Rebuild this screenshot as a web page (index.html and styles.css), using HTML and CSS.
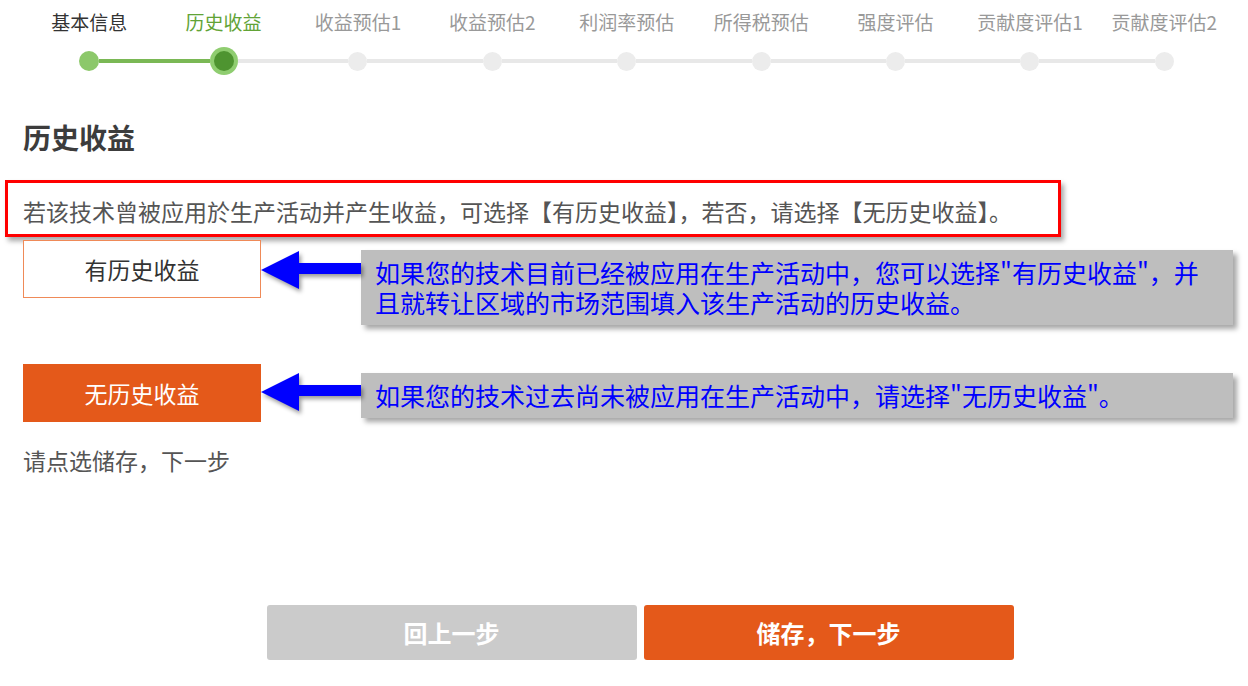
FILE: index.html
```html
<!DOCTYPE html>
<html lang="zh-CN">
<head>
<meta charset="utf-8">
<title>历史收益</title>
<link rel="stylesheet" href="styles.css">
</head>
<body>
<div class="page">
  <div class="steps">
    <div class="step done">
      <div class="step-label">基本信息</div>
      <div class="track"><span class="seg seg-none"></span><span class="dot"></span><span class="seg seg-green"></span></div>
    </div>
    <div class="step active">
      <div class="step-label">历史收益</div>
      <div class="track"><span class="seg seg-green"></span><span class="dot"><span class="dot-inner"></span></span><span class="seg"></span></div>
    </div>
    <div class="step">
      <div class="step-label">收益预估1</div>
      <div class="track"><span class="seg"></span><span class="dot"></span><span class="seg"></span></div>
    </div>
    <div class="step">
      <div class="step-label">收益预估2</div>
      <div class="track"><span class="seg"></span><span class="dot"></span><span class="seg"></span></div>
    </div>
    <div class="step">
      <div class="step-label">利润率预估</div>
      <div class="track"><span class="seg"></span><span class="dot"></span><span class="seg"></span></div>
    </div>
    <div class="step">
      <div class="step-label">所得税预估</div>
      <div class="track"><span class="seg"></span><span class="dot"></span><span class="seg"></span></div>
    </div>
    <div class="step">
      <div class="step-label">强度评估</div>
      <div class="track"><span class="seg"></span><span class="dot"></span><span class="seg"></span></div>
    </div>
    <div class="step">
      <div class="step-label">贡献度评估1</div>
      <div class="track"><span class="seg"></span><span class="dot"></span><span class="seg"></span></div>
    </div>
    <div class="step">
      <div class="step-label">贡献度评估2</div>
      <div class="track"><span class="seg"></span><span class="dot"></span><span class="seg seg-none"></span></div>
    </div>
  </div>

  <div class="content">
    <h1 class="title">历史收益</h1>
    <div class="notice">若该技术曾被应用於生产活动并产生收益，可选择【有历史收益】，若否，请选择【无历史收益】。</div>

    <div class="choice-row row-first">
      <button class="choice choice-outline">有历史收益</button>
      <svg class="arrow" width="100" height="60" viewBox="0 0 100 60"><polygon points="0,30 38,11 38,23 100,23 100,34 38,34 38,49" fill="#0000ff"/></svg>
      <div class="callout callout-two">
        <div class="callout-line">如果您的技术目前已经被应用在生产活动中，您可以选择"有历史收益"，并</div>
        <div class="callout-line">且就转让区域的市场范围填入该生产活动的历史收益。</div>
      </div>
    </div>

    <div class="choice-row row-second">
      <button class="choice choice-filled">无历史收益</button>
      <svg class="arrow" width="100" height="60" viewBox="0 0 100 60"><polygon points="0,28 38,9 38,21 100,21 100,32 38,32 38,47" fill="#0000ff"/></svg>
      <div class="callout callout-one"><div class="callout-line">如果您的技术过去尚未被应用在生产活动中，请选择"无历史收益"。</div></div>
    </div>

    <p class="hint">请点选储存，下一步</p>
  </div>

  <div class="footer">
    <button class="btn btn-back">回上一步</button>
    <button class="btn btn-next">储存，下一步</button>
  </div>
</div>
</body>
</html>
```

FILE: styles.css
```css
* { box-sizing: border-box; }
html, body { margin: 0; padding: 0; background: #ffffff; }
body {
  font-family: "Noto Sans CJK SC", "Noto Sans", sans-serif;
  color: #555;
}
.page { width: 1248px; height: 686px; overflow: hidden; }

/* steps */
.steps {
  display: grid;
  grid-template-columns: repeat(9, 134.4px);
  padding: 10px 0 0 22px;
}
.step { display: flex; flex-direction: column; align-items: stretch; }
.step-label {
  text-align: center;
  font-size: 19px;
  line-height: 24px;
  height: 24px;
  color: #999;
  white-space: nowrap;
}
.step.done .step-label { color: #333; }
.step.active .step-label { color: #62a336; }
.track {
  display: flex;
  align-items: center;
  height: 28px;
  margin-top: 13px;
}
.seg { flex: 1; height: 4px; background: #e8e8e8; }
.seg-green { background: #7ab855; }
.seg-none { background: transparent; }
.dot {
  width: 19px; height: 19px; border-radius: 50%;
  background: #ececec;
  display: flex; align-items: center; justify-content: center;
  flex: none;
}
.step.done .dot { width: 20px; height: 20px; background: #8cc86a; }
.step.active .dot { width: 28px; height: 28px; background: #8fcd70; }
.dot-inner { width: 20px; height: 20px; border-radius: 50%; background: #4e9430; }

/* content */
.content { padding-left: 23px; }
.title {
  margin: 44px 0 0;
  font-size: 28px;
  line-height: 36px;
  font-weight: bold;
  color: #3c3c3c;
}
.notice {
  margin: 25px 0 0 -18px;
  width: 1056px;
  height: 57px;
  border: 3px solid #ff0000;
  padding: 13px 0 0 15px;
  font-size: 23px;
  line-height: 30px;
  color: #555;
  box-shadow: 3px 4px 5px rgba(0,0,0,0.35);
  white-space: nowrap;
}

.choice-row { display: flex; align-items: flex-start; }
.row-first { margin-top: 3px; }
.row-second { margin-top: 39px; }
.choice {
  width: 238px;
  height: 58px;
  font-family: inherit;
  font-size: 23px;
  padding: 0;
  flex: none;
  cursor: pointer;
}
.choice-outline { background: #fff; border: 1px solid #ef8a58; color: #333; }
.choice-filled { background: #e4591a; border: 1px solid #e4591a; color: #fff; }
.arrow { flex: none; filter: drop-shadow(2px 3px 2px rgba(0,0,0,0.4)); }
.callout {
  width: 872px;
  background: #bebebe;
  color: #0000ff;
  font-size: 25px;
  padding-left: 14px;
  white-space: nowrap;
  box-shadow: 4px 4px 5px rgba(0,0,0,0.35);
}
.callout-line { height: 30px; line-height: 30px; }
.callout-two { margin-top: 10px; height: 75px; padding-top: 7px; }
.callout-one { margin-top: 9px; height: 45px; padding-top: 7px; }

.hint {
  margin: 21px 0 0;
  font-size: 23px;
  line-height: 30px;
  color: #555;
}

/* footer */
.footer {
  display: flex;
  justify-content: center;
  gap: 7px;
  padding-left: 32px;
  margin-top: 130px;
}
.btn {
  width: 370px;
  height: 55px;
  border: none;
  border-radius: 3px;
  font-family: inherit;
  font-size: 24px;
  font-weight: bold;
  color: #fff;
  cursor: pointer;
}
.btn-back { background: #cbcbcb; }
.btn-next { background: #e4591a; }
```
